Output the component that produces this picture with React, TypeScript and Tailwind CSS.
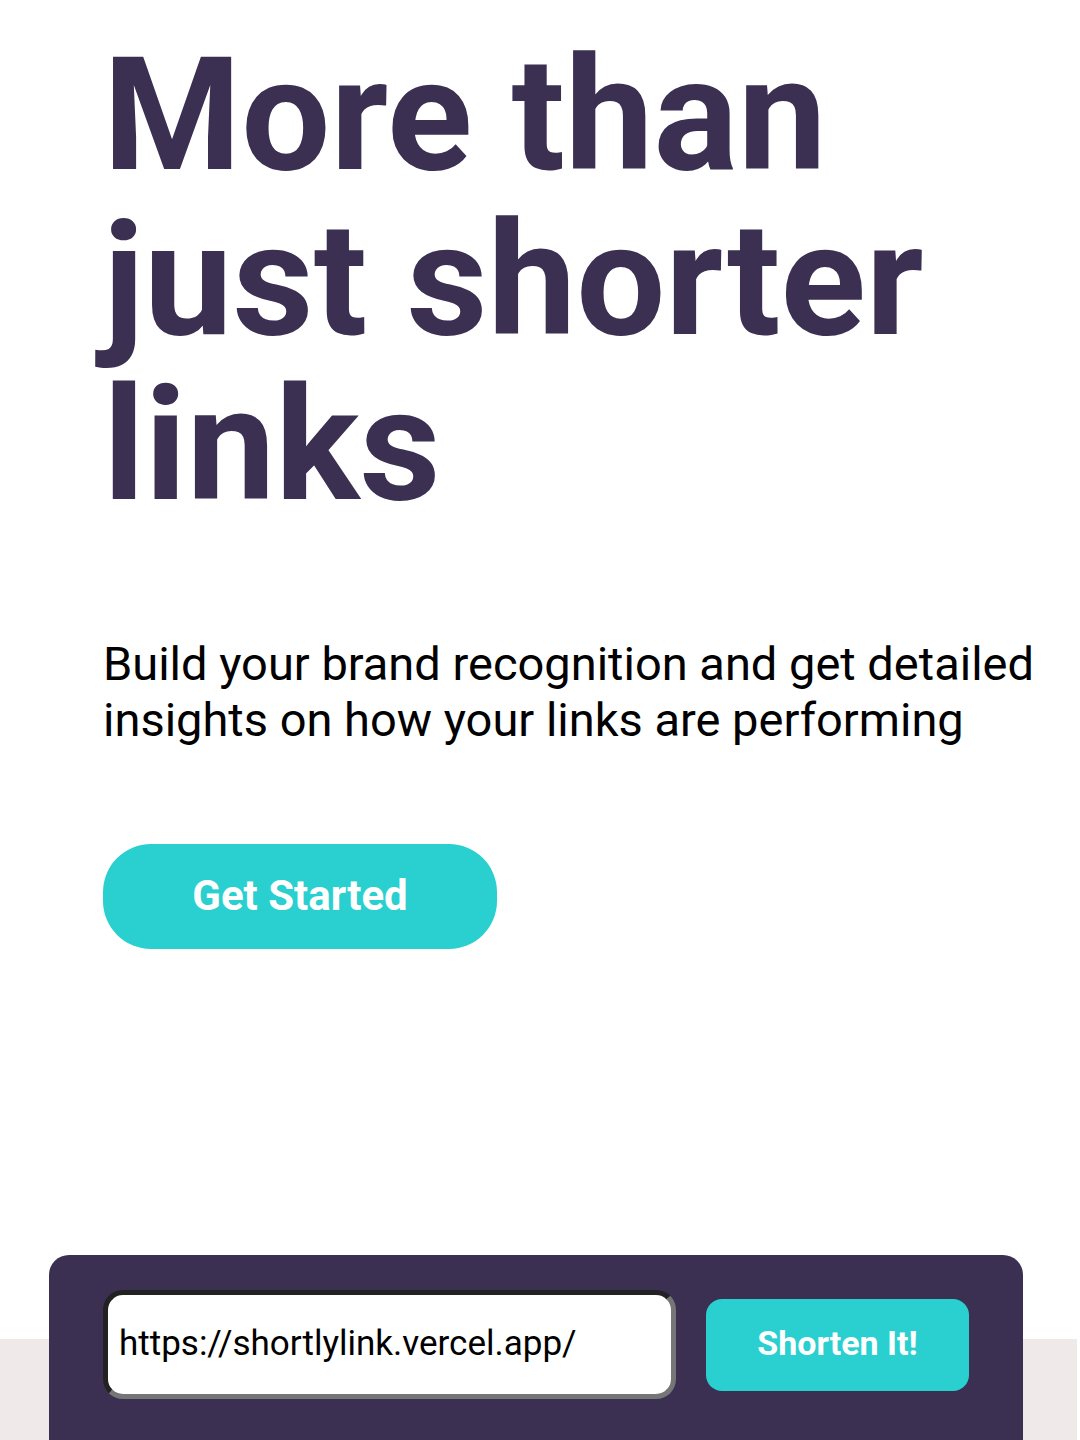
export default function App() {
  return (
    <main className="min-h-screen overflow-hidden bg-white font-['Roboto',sans-serif] text-black">
      <section className="pl-[103px] pt-[33px]">
        <h1 className="max-w-[900px] text-[158px] font-bold leading-[165px] text-[#3b2f52]">
          More than just shorter links
        </h1>
        <p className="mt-[108px] max-w-[960px] text-[47px] leading-[56px]">
          Build your brand recognition and get detailed insights on how your links are performing
        </p>
        <button
          type="button"
          className="mt-24 h-[105px] w-[394px] rounded-[48px] bg-[#2acfcf] pb-[3px] text-[42px] font-bold text-white"
        >
          Get Started
        </button>
      </section>
      <section className="mr-[3px] mt-[306px] bg-[linear-gradient(#ffffff_84px,#efe9ea_84px)] pl-[49px] pr-[54px]">
        <form className="flex h-[190px] items-start gap-[30px] rounded-t-[20px] bg-[#3b2f52] px-[54px] pt-[35px]">
          <input
            type="text"
            aria-label="Link to shorten"
            defaultValue="https://shortlylink.vercel.app/"
            className="h-[109px] min-w-0 flex-1 rounded-[20px] border-[5px] border-t-[#222222] border-l-[#222222] border-r-[#767676] border-b-[#767676] bg-white px-[11px] pb-[3px] text-[35px]"
          />
          <button
            type="button"
            className="mt-[9px] h-[92px] w-[263px] rounded-2xl bg-[#2acfcf] pb-[3px] text-[34px] font-bold text-white"
          >
            Shorten It!
          </button>
        </form>
      </section>
    </main>
  );
}
